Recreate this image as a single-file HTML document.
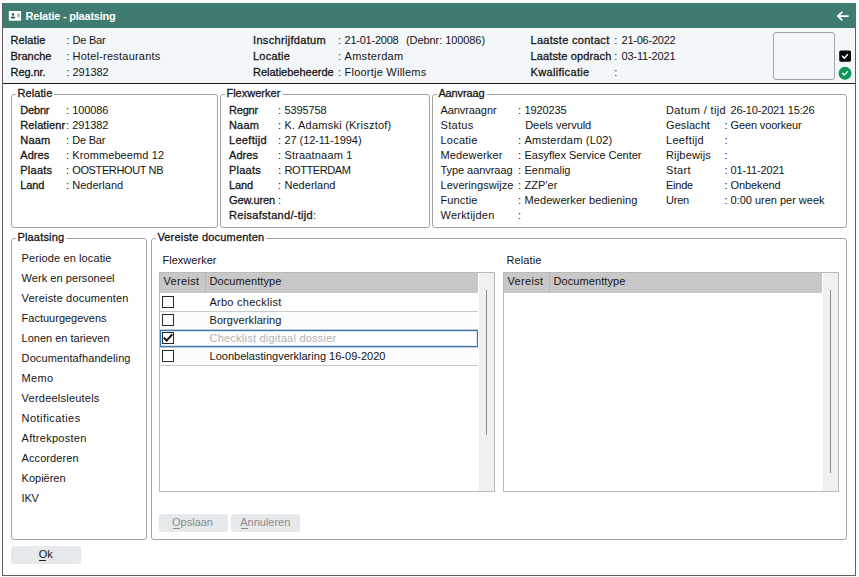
<!DOCTYPE html>
<html lang="nl"><head><meta charset="utf-8"><title>Relatie - plaatsing</title><style>html,body{margin:0;padding:0}
body{width:859px;height:577px;background:#fbfbfb;position:relative;overflow:hidden;font-family:"Liberation Sans",sans-serif;font-size:11px;color:#141414}
div,svg.a,span.t{position:absolute;box-sizing:border-box}
.t{white-space:pre;line-height:16px;height:16px}
.m{-webkit-text-stroke:0.28px #141414}
.b{font-weight:bold}
.w{color:#fff}
.g{color:#b0b0b0}
.win{background:#fff;border:1px solid #606060;border-top:none}
.title{background:#3f7b70}
.hdr{background:#f4f7f9}
.sep{background:#1c1c1c}
.pic{border:1px solid #a3a6aa;border-radius:3px;background:#f4f7f9}
.fs{border:1px solid #a4a4a4;border-radius:3px;background:transparent}
.lgbg{background:#fff}
.tbl{border:1px solid #b9b9b9;background:#fff}
.th{background:#c8c8c8}
.thsep{background:#b5b5b5}
.sb{background:#f0f0f0}
.sbthumb{background:#8c8c8c}
.rowline{background:#c9c9c9}
.selrow{border:1px solid #3679b5;background:#fff;box-shadow:inset 0 0 0 1px #d7e7f5}
.cb{border:1px solid #2b2b2b;background:#fff}
.btn{background:#e6e9ec;border-radius:3px}
.alt{background:#fafcfd}
.dis{color:#8b8b8b}
.ul{background:#1c1c1c}
.ul.dis{background:#8b8b8b}
</style></head><body>
<div class="win" style="left:2px;top:3px;width:854px;height:573px;"></div>
<div class="title" style="left:3px;top:3px;width:853px;height:25px;"></div>
<div class="hdr" style="left:3px;top:28px;width:851.5px;height:55px;"></div>
<div class="sep" style="left:3px;top:83px;width:853px;height:1px;"></div>
<svg class="a" style="left:0px;top:0px" width="30" height="28" viewBox="0 0 30 28"><rect x="8.8" y="10.9" width="12.3" height="9.8" rx="0.8" fill="#fbfffe"/><rect x="11.9" y="13.1" width="2.1" height="2.6" rx="0.9" fill="#3a5450"/><rect x="12.4" y="15.2" width="1.1" height="1.8" fill="#7f9a95"/><rect x="10.9" y="16.9" width="4.1" height="1.5" fill="#2f4a46"/><rect x="17.1" y="13.4" width="2.7" height="3.9" fill="#a9c4be"/></svg>
<span class="t b w" style="left:25.6px;top:8px;letter-spacing:-0.218px;">Relatie - plaatsing</span>
<svg class="a" style="left:830px;top:4px" width="24" height="24" viewBox="0 0 24 24"><path d="M18.6 12.1 H8.4 M12.3 7.8 L8 12.1 L12.3 16.4" fill="none" stroke="#fbfffe" stroke-width="1.9" stroke-linecap="butt" stroke-linejoin="miter"/></svg>
<span class="t m" style="left:10.5px;top:32px;letter-spacing:0.107px;">Relatie</span>
<span class="t " style="left:66.3px;top:32px;letter-spacing:-0.062px;">:</span>
<span class="t " style="left:72.5px;top:32px;letter-spacing:-0.208px;">De Bar</span>
<span class="t m" style="left:10.5px;top:48px;letter-spacing:0.002px;">Branche</span>
<span class="t " style="left:66.3px;top:48px;letter-spacing:-0.062px;">:</span>
<span class="t " style="left:72.5px;top:48px;letter-spacing:0.213px;">Hotel-restaurants</span>
<span class="t m" style="left:10.5px;top:64px;letter-spacing:-0.067px;">Reg.nr.</span>
<span class="t " style="left:66.3px;top:64px;letter-spacing:-0.062px;">:</span>
<span class="t " style="left:72.5px;top:64px;letter-spacing:-0.120px;">291382</span>
<span class="t m" style="left:253px;top:32px;letter-spacing:0.323px;">Inschrijfdatum</span>
<span class="t " style="left:338px;top:32px;letter-spacing:-0.062px;">:</span>
<span class="t " style="left:344.5px;top:32px;letter-spacing:-0.228px;">21-01-2008</span>
<span class="t m" style="left:253px;top:48px;letter-spacing:0.217px;">Locatie</span>
<span class="t " style="left:338px;top:48px;letter-spacing:-0.062px;">:</span>
<span class="t " style="left:344.5px;top:48px;letter-spacing:0.306px;">Amsterdam</span>
<span class="t m" style="left:253px;top:64px;letter-spacing:0.000px;width:81px;overflow:hidden;">Relatiebeheerde</span>
<span class="t " style="left:338px;top:64px;letter-spacing:-0.062px;">:</span>
<span class="t " style="left:344.5px;top:64px;letter-spacing:0.235px;">Floortje Willems</span>
<span class="t " style="left:406px;top:32px;letter-spacing:-0.074px;">(Debnr: 100086)</span>
<span class="t m" style="left:530.5px;top:32px;letter-spacing:0.293px;">Laatste contact</span>
<span class="t " style="left:614.2px;top:32px;letter-spacing:-0.062px;">:</span>
<span class="t " style="left:621.5px;top:32px;letter-spacing:-0.228px;">21-06-2022</span>
<span class="t m" style="left:530.5px;top:48px;letter-spacing:0.141px;">Laatste opdrach</span>
<span class="t " style="left:614.2px;top:48px;letter-spacing:-0.062px;">:</span>
<span class="t " style="left:621.5px;top:48px;letter-spacing:-0.145px;">03-11-2021</span>
<span class="t m" style="left:530.5px;top:64px;letter-spacing:0.331px;">Kwalificatie</span>
<span class="t " style="left:614.2px;top:64px;letter-spacing:-0.062px;">:</span>
<span class="t " style="left:621.5px;top:64px;letter-spacing:0.000px;"></span>
<div class="pic" style="left:773px;top:32px;width:62px;height:48px;"></div>
<svg class="a" style="left:835px;top:44px" width="20" height="24" viewBox="0 0 20 24"><rect x="4.2" y="6.5" width="11.8" height="11.2" rx="1.6" fill="#050505"/><path d="M7.1 11.9 L9.4 14.2 L12.9 10.2" fill="none" stroke="#fff" stroke-width="1.5"/></svg>
<svg class="a" style="left:835px;top:60px" width="20" height="23" viewBox="0 0 20 23"><circle cx="10" cy="13.25" r="6.45" fill="#12945a"/><path d="M7.1 13.1 L9.2 14.9 L12.9 11.25" fill="none" stroke="#e9fff4" stroke-width="1.4"/></svg>
<div class="fs" style="left:11px;top:94px;width:207px;height:134px;"></div>
<div class="lgbg" style="left:16px;top:91px;width:38px;height:8px;"></div>
<span class="t m" style="left:17.4px;top:84.5px;letter-spacing:0.107px;">Relatie</span>
<div class="fs" style="left:220px;top:94px;width:210px;height:134px;"></div>
<div class="lgbg" style="left:225px;top:91px;width:58px;height:8px;"></div>
<span class="t m" style="left:226.4px;top:84.5px;letter-spacing:0.020px;">Flexwerker</span>
<div class="fs" style="left:432px;top:94px;width:415px;height:134px;"></div>
<div class="lgbg" style="left:437px;top:91px;width:50px;height:8px;"></div>
<span class="t m" style="left:438.4px;top:84.5px;letter-spacing:-0.137px;">Aanvraag</span>
<div class="fs" style="left:11px;top:238px;width:136px;height:302px;"></div>
<div class="lgbg" style="left:16px;top:235px;width:50px;height:8px;"></div>
<span class="t m" style="left:17.4px;top:228.5px;letter-spacing:0.193px;">Plaatsing</span>
<div class="fs" style="left:151px;top:238px;width:696px;height:302px;"></div>
<div class="lgbg" style="left:156px;top:235px;width:110px;height:8px;"></div>
<span class="t m" style="left:157.4px;top:228.5px;letter-spacing:0.192px;">Vereiste documenten</span>
<span class="t m" style="left:20.3px;top:102px;letter-spacing:-0.194px;">Debnr</span>
<span class="t " style="left:66px;top:102px;letter-spacing:-0.062px;">:</span>
<span class="t " style="left:72.2px;top:102px;letter-spacing:-0.120px;">100086</span>
<span class="t m" style="left:20.3px;top:117px;letter-spacing:0.108px;">Relatienr</span>
<span class="t " style="left:66px;top:117px;letter-spacing:-0.062px;">:</span>
<span class="t " style="left:72.2px;top:117px;letter-spacing:-0.120px;">291382</span>
<span class="t m" style="left:20.3px;top:132px;letter-spacing:0.164px;">Naam</span>
<span class="t " style="left:66px;top:132px;letter-spacing:-0.062px;">:</span>
<span class="t " style="left:72.2px;top:132px;letter-spacing:-0.208px;">De Bar</span>
<span class="t m" style="left:20.3px;top:147px;letter-spacing:0.050px;">Adres</span>
<span class="t " style="left:66px;top:147px;letter-spacing:-0.062px;">:</span>
<span class="t " style="left:72.2px;top:147px;letter-spacing:0.107px;">Krommebeemd 12</span>
<span class="t m" style="left:20.3px;top:162px;letter-spacing:0.237px;">Plaats</span>
<span class="t " style="left:66px;top:162px;letter-spacing:-0.062px;">:</span>
<span class="t " style="left:72.2px;top:162px;letter-spacing:-0.367px;">OOSTERHOUT NB</span>
<span class="t m" style="left:20.3px;top:177px;letter-spacing:-0.121px;">Land</span>
<span class="t " style="left:66px;top:177px;letter-spacing:-0.062px;">:</span>
<span class="t " style="left:72.2px;top:177px;letter-spacing:0.026px;">Nederland</span>
<span class="t m" style="left:229px;top:102px;letter-spacing:-0.194px;">Regnr</span>
<span class="t " style="left:278px;top:102px;letter-spacing:-0.062px;">:</span>
<span class="t " style="left:284.5px;top:102px;letter-spacing:-0.118px;">5395758</span>
<span class="t m" style="left:229px;top:117px;letter-spacing:0.164px;">Naam</span>
<span class="t " style="left:278px;top:117px;letter-spacing:-0.062px;">:</span>
<span class="t " style="left:284.5px;top:117px;letter-spacing:0.234px;">K. Adamski (Krisztof)</span>
<span class="t m" style="left:229px;top:132px;letter-spacing:0.314px;">Leeftijd</span>
<span class="t " style="left:278px;top:132px;letter-spacing:-0.062px;">:</span>
<span class="t " style="left:284.5px;top:132px;letter-spacing:-0.072px;">27 (12-11-1994)</span>
<span class="t m" style="left:229px;top:147px;letter-spacing:0.050px;">Adres</span>
<span class="t " style="left:278px;top:147px;letter-spacing:-0.062px;">:</span>
<span class="t " style="left:284.5px;top:147px;letter-spacing:0.163px;">Straatnaam 1</span>
<span class="t m" style="left:229px;top:162px;letter-spacing:0.237px;">Plaats</span>
<span class="t " style="left:278px;top:162px;letter-spacing:-0.062px;">:</span>
<span class="t " style="left:284.5px;top:162px;letter-spacing:-0.408px;">ROTTERDAM</span>
<span class="t m" style="left:229px;top:177px;letter-spacing:-0.121px;">Land</span>
<span class="t " style="left:278px;top:177px;letter-spacing:-0.062px;">:</span>
<span class="t " style="left:284.5px;top:177px;letter-spacing:0.026px;">Nederland</span>
<span class="t m" style="left:229px;top:192px;letter-spacing:-0.137px;">Gew.uren</span>
<span class="t " style="left:278px;top:192px;letter-spacing:-0.062px;">:</span>
<span class="t " style="left:284.5px;top:192px;letter-spacing:0.000px;"></span>
<span class="t m" style="left:229px;top:207px;letter-spacing:0.301px;">Reisafstand/-tijd</span>
<span class="t " style="left:313px;top:207px;letter-spacing:-0.062px;">:</span>
<span class="t " style="left:284.5px;top:207px;letter-spacing:0.000px;"></span>
<span class="t " style="left:440.5px;top:102px;letter-spacing:-0.087px;">Aanvraagnr</span>
<span class="t " style="left:518px;top:102px;letter-spacing:-0.062px;">:</span>
<span class="t " style="left:524.5px;top:102px;letter-spacing:-0.118px;">1920235</span>
<span class="t " style="left:440.5px;top:117px;letter-spacing:0.302px;">Status</span>
<span class="t " style="left:525.2px;top:117px;letter-spacing:-0.049px;">Deels vervuld</span>
<span class="t " style="left:440.5px;top:132px;letter-spacing:0.217px;">Locatie</span>
<span class="t " style="left:518px;top:132px;letter-spacing:-0.062px;">:</span>
<span class="t " style="left:524.5px;top:132px;letter-spacing:0.201px;">Amsterdam (L02)</span>
<span class="t " style="left:440.5px;top:147px;letter-spacing:0.147px;">Medewerker</span>
<span class="t " style="left:518px;top:147px;letter-spacing:-0.062px;">:</span>
<span class="t " style="left:524.5px;top:147px;letter-spacing:-0.017px;">Easyflex Service Center</span>
<span class="t " style="left:440.5px;top:162px;letter-spacing:-0.060px;">Type aanvraag</span>
<span class="t " style="left:518px;top:162px;letter-spacing:-0.062px;">:</span>
<span class="t " style="left:524.5px;top:162px;letter-spacing:0.018px;">Eenmalig</span>
<span class="t " style="left:440.5px;top:177px;letter-spacing:0.060px;">Leveringswijze</span>
<span class="t " style="left:518px;top:177px;letter-spacing:-0.062px;">:</span>
<span class="t " style="left:524.5px;top:177px;letter-spacing:0.057px;">ZZP&#x27;er</span>
<span class="t " style="left:440.5px;top:192px;letter-spacing:0.132px;">Functie</span>
<span class="t " style="left:518px;top:192px;letter-spacing:-0.062px;">:</span>
<span class="t " style="left:524.5px;top:192px;letter-spacing:0.085px;">Medewerker bediening</span>
<span class="t " style="left:440.5px;top:207px;letter-spacing:0.223px;">Werktijden</span>
<span class="t " style="left:518px;top:207px;letter-spacing:-0.062px;">:</span>
<span class="t " style="left:524.5px;top:207px;letter-spacing:0.000px;"></span>
<span class="t " style="left:666px;top:102px;letter-spacing:0.363px;">Datum / tijd</span>
<span class="t " style="left:730.5px;top:102px;letter-spacing:-0.179px;">26-10-2021 15:26</span>
<span class="t " style="left:666px;top:117px;letter-spacing:0.072px;">Geslacht</span>
<span class="t " style="left:724.5px;top:117px;letter-spacing:-0.062px;">:</span>
<span class="t " style="left:730.5px;top:117px;letter-spacing:-0.136px;">Geen voorkeur</span>
<span class="t " style="left:666px;top:132px;letter-spacing:0.314px;">Leeftijd</span>
<span class="t " style="left:724.5px;top:132px;letter-spacing:-0.062px;">:</span>
<span class="t " style="left:730.5px;top:132px;letter-spacing:0.000px;"></span>
<span class="t " style="left:666px;top:147px;letter-spacing:0.177px;">Rijbewijs</span>
<span class="t " style="left:724.5px;top:147px;letter-spacing:-0.062px;">:</span>
<span class="t " style="left:730.5px;top:147px;letter-spacing:0.000px;"></span>
<span class="t " style="left:666px;top:162px;letter-spacing:0.353px;">Start</span>
<span class="t " style="left:724.5px;top:162px;letter-spacing:-0.062px;">:</span>
<span class="t " style="left:730.5px;top:162px;letter-spacing:-0.145px;">01-11-2021</span>
<span class="t " style="left:666px;top:177px;letter-spacing:-0.228px;">Einde</span>
<span class="t " style="left:724.5px;top:177px;letter-spacing:-0.062px;">:</span>
<span class="t " style="left:730.5px;top:177px;letter-spacing:-0.096px;">Onbekend</span>
<span class="t " style="left:666px;top:192px;letter-spacing:-0.211px;">Uren</span>
<span class="t " style="left:724.5px;top:192px;letter-spacing:-0.062px;">:</span>
<span class="t " style="left:730.5px;top:192px;letter-spacing:-0.010px;">0:00 uren per week</span>
<span class="t " style="left:21.6px;top:249.7px;letter-spacing:0.108px;">Periode en locatie</span>
<span class="t " style="left:21.6px;top:269.7px;letter-spacing:0.051px;">Werk en personeel</span>
<span class="t " style="left:21.6px;top:289.7px;letter-spacing:0.192px;">Vereiste documenten</span>
<span class="t " style="left:21.6px;top:309.7px;letter-spacing:0.000px;">Factuurgegevens</span>
<span class="t " style="left:21.6px;top:329.7px;letter-spacing:-0.005px;">Lonen en tarieven</span>
<span class="t " style="left:21.6px;top:349.7px;letter-spacing:0.104px;">Documentafhandeling</span>
<span class="t " style="left:21.6px;top:369.7px;letter-spacing:0.359px;">Memo</span>
<span class="t " style="left:21.6px;top:389.7px;letter-spacing:0.226px;">Verdeelsleutels</span>
<span class="t " style="left:21.6px;top:409.7px;letter-spacing:0.434px;">Notificaties</span>
<span class="t " style="left:21.6px;top:429.7px;letter-spacing:0.270px;">Aftrekposten</span>
<span class="t " style="left:21.6px;top:449.7px;letter-spacing:0.073px;">Accorderen</span>
<span class="t " style="left:21.6px;top:469.7px;letter-spacing:-0.006px;">Kopiëren</span>
<span class="t " style="left:21.6px;top:489.7px;letter-spacing:-0.245px;">IKV</span>
<span class="t " style="left:162.5px;top:252px;letter-spacing:0.020px;">Flexwerker</span>
<span class="t " style="left:506.5px;top:252px;letter-spacing:0.107px;">Relatie</span>
<div class="tbl" style="left:159px;top:272px;width:336px;height:220px;"></div>
<div class="th" style="left:160px;top:273px;width:318px;height:20px;"></div>
<div class="thsep" style="left:205px;top:273px;width:1px;height:20px;"></div>
<span class="t " style="left:163.5px;top:273px;letter-spacing:0.337px;">Vereist</span>
<span class="t " style="left:209.5px;top:273px;letter-spacing:0.089px;">Documenttype</span>
<div class="sb" style="left:479px;top:273px;width:15px;height:218px;"></div>
<div class="sbthumb" style="left:486px;top:290px;width:1px;height:145px;"></div>
<div class="tbl" style="left:503px;top:272px;width:336px;height:220px;"></div>
<div class="th" style="left:504px;top:273px;width:318px;height:20px;"></div>
<div class="thsep" style="left:549px;top:273px;width:1px;height:20px;"></div>
<span class="t " style="left:507.5px;top:273px;letter-spacing:0.337px;">Vereist</span>
<span class="t " style="left:553.5px;top:273px;letter-spacing:0.089px;">Documenttype</span>
<div class="sb" style="left:823px;top:273px;width:15px;height:218px;"></div>
<div class="sbthumb" style="left:830px;top:290px;width:1px;height:183px;"></div>
<div class="rowline" style="left:160px;top:311px;width:318px;height:1px;"></div>
<div class="cb" style="left:162px;top:296px;width:12px;height:12px;"></div>
<span class="t " style="left:209.5px;top:294px;letter-spacing:0.251px;">Arbo checklist</span>
<div class="alt" style="left:160px;top:312px;width:318px;height:17px;"></div>
<div class="rowline" style="left:160px;top:329px;width:318px;height:1px;"></div>
<div class="cb" style="left:162px;top:314px;width:12px;height:12px;"></div>
<span class="t " style="left:209.5px;top:312px;letter-spacing:0.077px;">Borgverklaring</span>
<div class="rowline" style="left:160px;top:347px;width:318px;height:1px;"></div>
<div class="selrow" style="left:160px;top:330px;width:318px;height:17px;"></div>
<div class="cb" style="left:162px;top:332px;width:12px;height:12px;"></div>
<span class="t g" style="left:209.5px;top:330px;letter-spacing:0.228px;">Checklist digitaal dossier</span>
<svg class="a" style="left:162px;top:332px" width="12" height="12" viewBox="0 0 12 12"><path d="M1.8 5.7 L4.6 8.6 L10.3 2.3" fill="none" stroke="#0a0a0a" stroke-width="1.9"/></svg>
<div class="alt" style="left:160px;top:348px;width:318px;height:17px;"></div>
<div class="rowline" style="left:160px;top:365px;width:318px;height:1px;"></div>
<div class="cb" style="left:162px;top:350px;width:12px;height:12px;"></div>
<span class="t " style="left:209.5px;top:348px;letter-spacing:0.014px;">Loonbelastingverklaring 16-09-2020</span>
<div class="btn" style="left:159px;top:514px;width:69px;height:18px;"></div>
<div class="btn" style="left:231px;top:514px;width:69px;height:18px;"></div>
<div class="btn" style="left:11px;top:546px;width:70px;height:18px;"></div>
<span class="t dis" style="left:172px;top:514px;letter-spacing:0.002px;">Opslaan</span>
<span class="t dis" style="left:240.3px;top:514px;letter-spacing:-0.017px;">Annuleren</span>
<span class="t " style="left:38.7px;top:546px;letter-spacing:-0.031px;">Ok</span>
<div class="ul dis" style="left:172.5px;top:528px;width:7px;height:1px;"></div>
<div class="ul dis" style="left:240.5px;top:528px;width:7px;height:1px;"></div>
<div class="ul" style="left:39px;top:560px;width:7px;height:1px;"></div>
</body></html>
